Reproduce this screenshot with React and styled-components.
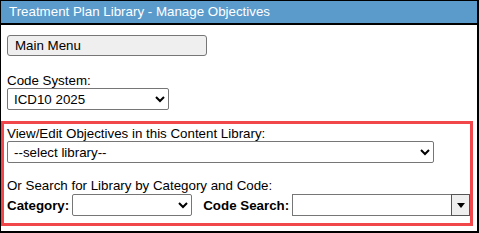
import React from 'react';
import styled, { createGlobalStyle } from 'styled-components';

const GlobalStyle = createGlobalStyle`
  body {
    margin: 0;
    background: #fff;
    font-family: "Liberation Sans", Arial, sans-serif;
  }
`;

const Frame = styled.div`
  box-sizing: border-box;
  width: 479px;
  height: 233px;
  border: 1px solid #000;
  border-right-width: 2px;
  border-bottom-width: 2px;
  background: #fff;
`;

const Header = styled.div`
  height: 22px;
  background: #5b9bcc;
  border-bottom: 2px solid #000;
  color: #fff;
  font-size: 13.33px;
  line-height: 22px;
  padding-left: 8px;
`;

const Body = styled.div`
  padding-top: 10px;
`;

const TopSection = styled.div`
  padding-left: 6px;
`;

const MenuButton = styled.button`
  box-sizing: border-box;
  width: 200px;
  height: 21px;
  padding: 0 0 0 7px;
  text-align: left;
  background: #efefef;
  border: 1px solid #767676;
  border-radius: 3px;
  font-family: "Liberation Sans", Arial, sans-serif;
  font-size: 13.33px;
  color: #000;
`;

const Label = styled.div`
  font-size: 13.33px;
  line-height: 15px;
  color: #000;
  white-space: nowrap;
`;

const Field = styled.div`
  margin-top: ${(p) => p.top || 0}px;
`;

const Select = styled.select`
  box-sizing: border-box;
  flex-shrink: 0;
  width: ${(p) => p.w}px;
  height: 22px;
  font-family: "Liberation Sans", Arial, sans-serif;
  font-size: 13.33px;
  color: #000;
  background: #fff;
  border: 1px solid #767676;
  border-radius: 2px;
  padding: 0 2px;
`;

const Highlight = styled.div`
  margin-top: 11px;
  width: 472px;
  box-sizing: border-box;
  border: 3px solid #f2474a;
  padding: 2px 0 7px 3px;
`;

const Row = styled.div`
  display: flex;
  align-items: center;
  margin-top: 1px;
  white-space: nowrap;
`;

const InlineLabel = styled.span`
  flex-shrink: 0;
  font-size: 13.33px;
  font-weight: bold;
  margin-right: ${(p) => p.gap || 0}px;
  margin-left: ${(p) => p.left || 0}px;
`;

const ComboInput = styled.input`
  box-sizing: border-box;
  flex-shrink: 0;
  width: 159px;
  height: 22px;
  border: 1px solid #767676;
  border-right: none;
  font-family: "Liberation Sans", Arial, sans-serif;
  font-size: 13.33px;
  padding: 0 3px;
  outline: none;
`;

const ComboButton = styled.div`
  box-sizing: border-box;
  flex-shrink: 0;
  width: 19px;
  height: 22px;
  border: 1px solid #555;
  background: #efefef;
  display: flex;
  align-items: center;
  justify-content: center;
`;

const Triangle = styled.div`
  width: 0;
  height: 0;
  border-left: 4px solid transparent;
  border-right: 4px solid transparent;
  border-top: 5px solid #000;
`;

export default function App() {
  return (
    <>
      <GlobalStyle />
      <Frame>
        <Header>Treatment Plan Library - Manage Objectives</Header>
        <Body>
          <TopSection>
            <MenuButton>Main Menu</MenuButton>
            <Field top={17}>
              <Label>Code System:</Label>
              <Select w={162} defaultValue="icd10">
                <option value="icd10">ICD10 2025</option>
              </Select>
            </Field>
          </TopSection>
          <Highlight>
            <Label>View/Edit Objectives in this Content Library:</Label>
            <Select w={427} defaultValue="">
              <option value="">--select library--</option>
            </Select>
            <Field top={15}>
              <Label>Or Search for Library by Category and Code:</Label>
              <Row>
                <InlineLabel gap={3}>Category:</InlineLabel>
                <Select w={120} defaultValue="">
                  <option value=""></option>
                </Select>
                <InlineLabel left={11} gap={3}>Code Search:</InlineLabel>
                <ComboInput />
                <ComboButton>
                  <Triangle />
                </ComboButton>
              </Row>
            </Field>
          </Highlight>
        </Body>
      </Frame>
    </>
  );
}
